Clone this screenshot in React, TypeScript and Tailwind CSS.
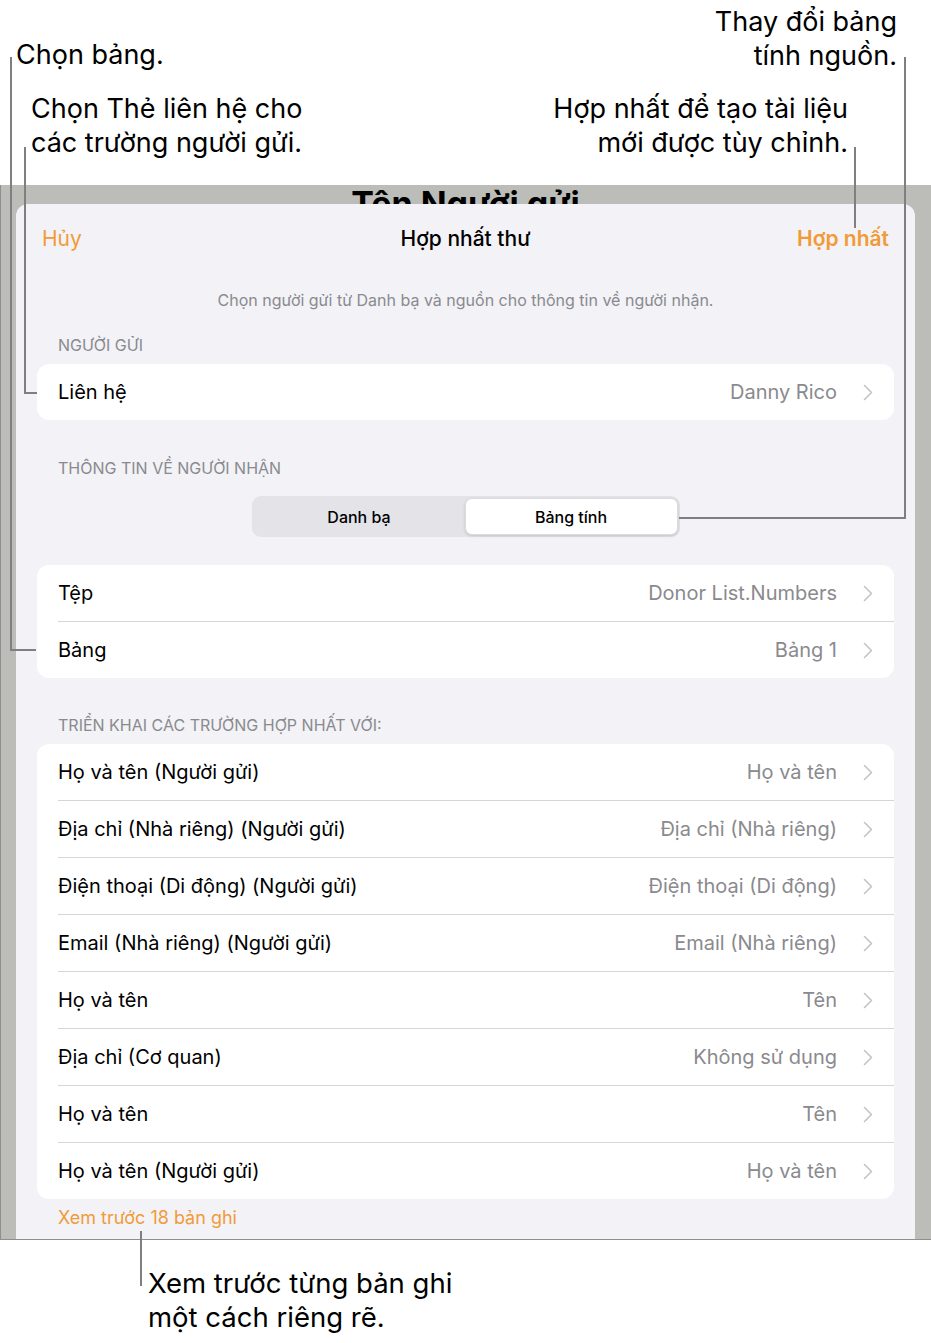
import React from 'react'

interface RowProps {
  label: string
  value: string
  last?: boolean
}

const Chevron = () => (
  <svg width="10" height="17" viewBox="0 0 10 17" fill="none">
    <path d="M1.5 1.5L8.5 8.5L1.5 15.5" stroke="#c4c4c8" strokeWidth="1.6" strokeLinecap="round" strokeLinejoin="round" />
  </svg>
)

const Row: React.FC<RowProps> = ({ label, value, last }) => {
  return (
    <div className="flex pl-[21px]">
      <div
        className={
          last
            ? 'flex flex-1 items-center h-[56px] pr-[21px]'
            : 'flex flex-1 items-center h-[57px] pr-[21px] border-b border-[#d6d6da]'
        }
      >
        <span className="flex-1 text-[20px] text-black">{label}</span>
        <span className="text-[20px] text-[#8a8a8e] mr-[26px]">{value}</span>
        <Chevron />
      </div>
    </div>
  )
}

const SectionLabel = ({ children }: { children: React.ReactNode }) => (
  <div className="pl-[42px] text-[16px] leading-[20px] text-[#8a8a8e] uppercase">{children}</div>
)

const fields = [
  { label: 'Họ và tên (Người gửi)', value: 'Họ và tên' },
  { label: 'Địa chỉ (Nhà riêng) (Người gửi)', value: 'Địa chỉ (Nhà riêng)' },
  { label: 'Điện thoại (Di động) (Người gửi)', value: 'Điện thoại (Di động)' },
  { label: 'Email (Nhà riêng) (Người gửi)', value: 'Email (Nhà riêng)' },
  { label: 'Họ và tên', value: 'Tên' },
  { label: 'Địa chỉ (Cơ quan)', value: 'Không sử dụng' },
  { label: 'Họ và tên', value: 'Tên' },
  { label: 'Họ và tên (Người gửi)', value: 'Họ và tên' },
]

const App: React.FC = () => {
  return (
    <div className="relative w-[931px] h-[1343px] bg-white overflow-hidden font-['Inter',sans-serif] text-black">
      {/* callouts top */}
      <div className="flex justify-between h-[185px] text-[27px] leading-[34px]">
        <div className="flex flex-col">
          <div className="ml-[16px] mt-[38px]">Chọn bảng.</div>
          <div className="ml-[31px] mt-[20px]">
            Chọn Thẻ liên hệ cho
            <br />
            các trường người gửi.
          </div>
        </div>
        <div className="flex flex-col items-end text-right">
          <div className="mr-[34px] mt-[5px]">
            Thay đổi bảng
            <br />
            tính nguồn.
          </div>
          <div className="mr-[83px] mt-[19px]">
            Hợp nhất để tạo tài liệu
            <br />
            mới được tùy chỉnh.
          </div>
        </div>
      </div>

      {/* screenshot frame */}
      <div className="flex flex-col h-[1055px] bg-[#bcbdb8] border-l border-b border-[#8f908c] pl-[15px] pr-[16px]">
        <div className="h-[19px] overflow-hidden text-center">
          <div className="pt-[2px] text-[34px] leading-[34px] font-bold text-black">Tên Người gửi</div>
        </div>
        <div className="flex-1 flex flex-col bg-[#f2f2f7] rounded-t-[12px] overflow-hidden">
          <div className="flex items-center h-[70px] px-[26px] text-[21px]">
            <span className="flex-1 text-[#f19b38]">Hủy</span>
            <span className="font-medium">Hợp nhất thư</span>
            <span className="flex-1 text-right font-semibold text-[#f19b38]">Hợp nhất</span>
          </div>
          <div className="mt-[16px] text-center text-[16px] leading-[20px] text-[#8a8a8e]">
            Chọn người gửi từ Danh bạ và nguồn cho thông tin về người nhận.
          </div>

          <div className="mt-[25px]">
            <SectionLabel>Người gửi</SectionLabel>
          </div>
          <div className="mx-[21px] mt-[9px] bg-white rounded-[12px]">
            <Row label="Liên hệ" value="Danny Rico" last />
          </div>

          <div className="mt-[38px]">
            <SectionLabel>Thông tin về người nhận</SectionLabel>
          </div>
          <div className="mt-[18px] flex justify-center">
            <div className="flex w-[428px] h-[41px] p-[2px] bg-[#e3e3e8] rounded-[9px] text-[16px] font-medium">
              <div className="flex-1 flex items-center justify-center">Danh bạ</div>
              <div className="flex-1 flex items-center justify-center bg-white rounded-[7px] shadow-[0_1px_3px_rgba(0,0,0,0.15)] border border-[#dcdce0]">
                Bảng tính
              </div>
            </div>
          </div>

          <div className="mx-[21px] mt-[28px] bg-white rounded-[12px]">
            <Row label="Tệp" value="Donor List.Numbers" />
            <Row label="Bảng" value="Bảng 1" last />
          </div>

          <div className="mt-[37px]">
            <SectionLabel>Triển khai các trường hợp nhất với:</SectionLabel>
          </div>
          <div className="mx-[21px] mt-[9px] bg-white rounded-[12px]">
            {fields.map((f, i) => (
              <Row key={i} label={f.label} value={f.value} last={i === fields.length - 1} />
            ))}
          </div>

          <div className="mt-[8px] pl-[42px] text-[18px] leading-[22px] text-[#f19b38]">Xem trước 18 bản ghi</div>
        </div>
      </div>

      {/* callout bottom */}
      <div className="mt-[26px] ml-[148px] text-[27.5px] leading-[34px]">
        Xem trước từng bản ghi
        <br />
        một cách riêng rẽ.
      </div>

      {/* leader lines */}
      <svg className="absolute inset-0 pointer-events-none" width="931" height="1343" fill="none">
        <g stroke="#7f7f7f" strokeWidth="2">
          <path d="M11 57V650H36" />
          <path d="M25 147V393H37" />
          <path d="M905 57V518H679" />
          <path d="M855 147V228" />
          <path d="M141 1231V1286" />
        </g>
      </svg>
    </div>
  )
}

export default App
